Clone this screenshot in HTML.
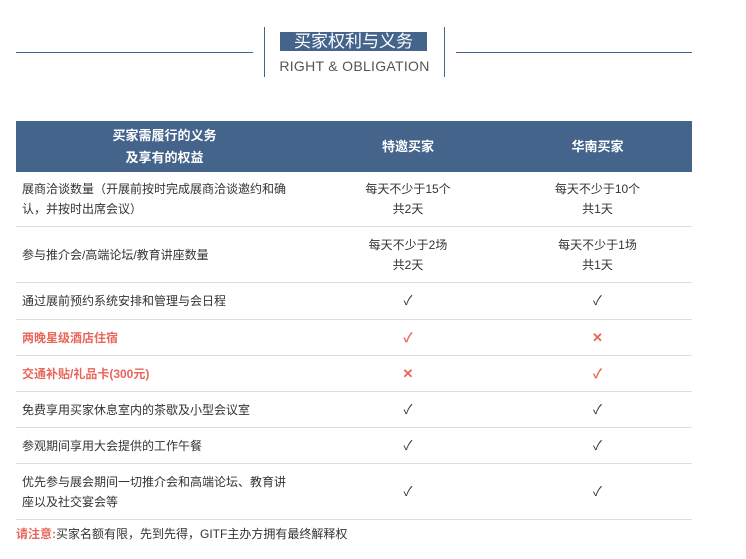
<!DOCTYPE html>
<html><head><meta charset="utf-8"><style>
*{margin:0;padding:0;box-sizing:border-box}
body{width:746px;height:559px;background:#fff;position:relative;font-family:"Liberation Sans","Noto Sans CJK SC",sans-serif;color:#333;overflow:hidden}
.a{position:absolute}
.hl{position:absolute;height:1px;background:#44648c;top:52px}
.vl{position:absolute;width:1px;background:#44648c;top:27px;height:50px}
.title{left:280px;top:32px;width:147px;height:19px;background:#44648c;color:#fff;font-size:17px;line-height:19px;text-align:center;letter-spacing:0px}
.sub{left:264px;top:58px;width:181px;text-align:center;font-size:14px;color:#555;letter-spacing:0.3px}
.hd{left:16px;top:121px;width:676px;height:51px;background:#44648c;color:#fff;font-weight:bold;font-size:13px}
.row{position:absolute;left:16px;width:676px;border-bottom:1px solid #ddd;font-size:12px}
.c{position:absolute;top:0;height:100%;display:flex;align-items:center}
.c1{left:6px;width:270px;line-height:20px}
.c2{left:297px;width:190px;justify-content:center;text-align:center;line-height:20px}
.c3{left:487px;width:189px;justify-content:center;text-align:center;line-height:20px}
.red{color:#e8665a;font-weight:bold}
.ck{font-size:13px}
</style></head><body>
<div class="hl" style="left:16px;width:237px"></div>
<div class="hl" style="left:456px;width:236px"></div>
<div class="vl" style="left:264px"></div>
<div class="vl" style="left:444px"></div>
<div class="a title">买家权利与义务</div>
<div class="a sub">RIGHT &amp; OBLIGATION</div>

<div class="a hd">
<div class="c c1" style="left:0;width:297px;justify-content:center;text-align:center;line-height:22px">买家需履行的义务<br>及享有的权益</div>
<div class="c c2">特邀买家</div>
<div class="c c3">华南买家</div>
</div>

<div class="row" style="top:172px;height:55px"><div class="c c1">展商洽谈数量（开展前按时完成展商洽谈邀约和确认，并按时出席会议）</div><div class="c c2">每天不少于15个<br>共2天</div><div class="c c3">每天不少于10个<br>共1天</div></div>
<div class="row" style="top:227px;height:56px"><div class="c c1">参与推介会/高端论坛/教育讲座数量</div><div class="c c2">每天不少于2场<br>共2天</div><div class="c c3">每天不少于1场<br>共1天</div></div>
<div class="row" style="top:283px;height:37px"><div class="c c1">通过展前预约系统安排和管理与会日程</div><div class="c c2 ck">✓</div><div class="c c3 ck">✓</div></div>
<div class="row" style="top:320px;height:36px"><div class="c c1 red">两晚星级酒店住宿</div><div class="c c2 ck red">✓</div><div class="c c3 ck red">✕</div></div>
<div class="row" style="top:356px;height:36px"><div class="c c1 red">交通补贴/礼品卡(300元)</div><div class="c c2 ck red">✕</div><div class="c c3 ck red">✓</div></div>
<div class="row" style="top:392px;height:36px"><div class="c c1">免费享用买家休息室内的茶歇及小型会议室</div><div class="c c2 ck">✓</div><div class="c c3 ck">✓</div></div>
<div class="row" style="top:428px;height:36px"><div class="c c1">参观期间享用大会提供的工作午餐</div><div class="c c2 ck">✓</div><div class="c c3 ck">✓</div></div>
<div class="row" style="top:464px;height:56px"><div class="c c1">优先参与展会期间一切推介会和高端论坛、教育讲座以及社交宴会等</div><div class="c c2 ck">✓</div><div class="c c3 ck">✓</div></div>

<div class="a" style="left:16px;top:525px;font-size:12px;line-height:18px"><span style="color:#e8665a;font-weight:bold">请注意:</span>买家名额有限，先到先得，GITF主办方拥有最终解释权</div>
</body></html>
